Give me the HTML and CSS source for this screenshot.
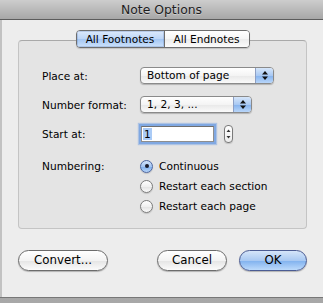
FILE: index.html
```html
<!DOCTYPE html>
<html>
<head>
<meta charset="utf-8">
<link rel="stylesheet" href="styles.css">
</head>
<body>
<div class="window">
  <div class="titlebar">Note Options</div>
  <div class="content">
    <div class="group">
      <div class="tabs">
        <div class="tab tab-sel">All Footnotes</div>
        <div class="tab tab-off">All Endnotes</div>
      </div>
      <div class="form">
        <div class="row r1">
          <div class="label">Place at:</div>
          <div class="popup popup-wide">
            <div class="val">Bottom of page</div>
            <div class="arr"><svg width="6" height="9" viewBox="0 0 6 9"><polygon points="0,3.5 3,0 6,3.5" fill="#111"/><polygon points="0,5.5 6,5.5 3,9" fill="#111"/></svg></div>
          </div>
        </div>
        <div class="row r2">
          <div class="label">Number format:</div>
          <div class="popup popup-narrow">
            <div class="val">1, 2, 3, ...</div>
            <div class="arr"><svg width="6" height="9" viewBox="0 0 6 9"><polygon points="0,3.5 3,0 6,3.5" fill="#111"/><polygon points="0,5.5 6,5.5 3,9" fill="#111"/></svg></div>
          </div>
        </div>
        <div class="row r3">
          <div class="label">Start at:</div>
          <div class="field"><span class="sel">1</span></div>
          <div class="stepper"><svg width="5" height="12" viewBox="0 0 5 12"><polygon points="0.5,4 2.5,1.5 4.5,4" fill="#333"/><polygon points="0.5,8 4.5,8 2.5,10.5" fill="#333"/></svg></div>
        </div>
        <div class="row r4">
          <div class="label lab-radio">Numbering:</div>
          <div class="opts">
            <div class="opt"><span class="radio radio-on"><span class="dot"></span></span>Continuous</div>
            <div class="opt"><span class="radio"></span>Restart each section</div>
            <div class="opt"><span class="radio"></span>Restart each page</div>
          </div>
        </div>
      </div>
    </div>
    <div class="buttons">
      <div class="btn btn-convert">Convert...</div>
      <div class="btn btn-cancel">Cancel</div>
      <div class="btn btn-ok">OK</div>
    </div>
  </div>
</div>
</body>
</html>
```
FILE: styles.css
```css
html, body {
  margin: 0;
  padding: 0;
}
body {
  width: 323px;
  height: 303px;
  overflow: hidden;
  background: linear-gradient(#8c8c8c, #a8a8a8);
  font-family: "DejaVu Sans", sans-serif;
  font-size: 10.6px;
  color: #000;
}
.window {
  height: 298px;
  background: #ededed;
  display: flex;
  flex-direction: column;
  box-sizing: border-box;
  border-bottom: 1px solid #777;
}
.titlebar {
  height: 19px;
  line-height: 19px;
  border-bottom: 1px solid #5c5c5c;
  background: linear-gradient(#cdcdcd, #a7a7a7);
  text-align: center;
  font-size: 12.4px;
  color: #1e1e1e;
  text-shadow: 0 1px 0 rgba(255, 255, 255, 0.35);
}
.content {
  flex: 1;
  border-left: 2px solid #c2c2c2;
  padding: 20px 16px 0 16px;
  display: flex;
  flex-direction: column;
}
.group {
  border: 1px solid #c4c4c4;
  border-top-color: #a9a9a9;
  border-radius: 4px;
  background: #e4e4e4;
  padding: 0 0 12px 0;
  display: flex;
  flex-direction: column;
}
.tabs {
  align-self: center;
  margin-top: -11px;
  display: flex;
  height: 18px;
  box-sizing: border-box;
  border: 1px solid #6d6d6d;
  border-radius: 4px;
  overflow: hidden;
  box-shadow: 0 1px 1px rgba(0, 0, 0, 0.15);
}
.tab {
  line-height: 16px;
  text-align: center;
  box-sizing: border-box;
}
.tab-sel {
  width: 87px;
  background: linear-gradient(#dce9fb 0%, #bcd5f7 50%, #a3c6f3 51%, #cde2fb 100%);
  box-shadow: inset 0 0 0 1px rgba(80, 110, 170, 0.25);
}
.tab-off {
  width: 85px;
  border-left: 1px solid #6d6d6d;
  background: linear-gradient(#ffffff 0%, #f5f5f5 50%, #ebebeb 51%, #fbfbfb 100%);
}
.form {
  padding-left: 23px;
  display: flex;
  flex-direction: column;
}
.row {
  display: flex;
  align-items: center;
}
.label {
  width: 98px;
  flex: none;
}
.r1 {
  margin-top: 19px;
  height: 17px;
}
.r2 {
  margin-top: 12px;
  height: 17px;
}
.r3 {
  margin-top: 10px;
  height: 22px;
}
.r4 {
  margin-top: 11px;
  align-items: flex-start;
}
.lab-radio {
  line-height: 20px;
}
.popup {
  display: flex;
  height: 17px;
  box-sizing: border-box;
  border: 1px solid #8a8a8a;
  border-radius: 4px;
  background: linear-gradient(#ffffff 0%, #f4f4f4 50%, #e8e8e8 51%, #fafafa 100%);
  box-shadow: 0 1px 1px rgba(0, 0, 0, 0.22);
  overflow: hidden;
}
.popup-wide {
  width: 134px;
}
.popup-narrow {
  width: 112px;
}
.val {
  flex: 1;
  padding-left: 6px;
  line-height: 15px;
  white-space: nowrap;
}
.arr {
  width: 17px;
  flex: none;
  border-left: 1px solid #8d9fc4;
  background: linear-gradient(#d6e6fa 0%, #a9c9f3 50%, #84b2ee 51%, #b9d6f9 100%);
  display: flex;
  align-items: center;
  justify-content: center;
}
.field {
  margin-left: 1px;
  width: 73px;
  height: 16px;
  box-sizing: border-box;
  border: 1px solid #8e8e8e;
  border-top-color: #6f6f6f;
  background: #fff;
  padding-left: 1px;
  line-height: 14px;
  box-shadow: 0 0 0 2px #80a8e2, 0 0 1px 3px rgba(128, 168, 226, 0.55);
}
.sel {
  background: #abcbf6;
  padding: 0 1px;
}
.stepper {
  margin-left: 10px;
  width: 9px;
  height: 18px;
  box-sizing: border-box;
  border: 1px solid #7a7a7a;
  border-radius: 4px;
  background: linear-gradient(#ffffff, #ececec);
  display: flex;
  align-items: center;
  justify-content: center;
  box-shadow: 0 1px 1px rgba(0, 0, 0, 0.15);
}
.opts {
  display: flex;
  flex-direction: column;
}
.opt {
  height: 20px;
  display: flex;
  align-items: center;
}
.radio {
  width: 13px;
  height: 13px;
  box-sizing: border-box;
  border-radius: 50%;
  border: 1px solid #7b7b7b;
  background: linear-gradient(#ffffff, #f0f0f0 50%, #e2e2e2 51%, #fafafa);
  box-shadow: 0 1px 1px rgba(0, 0, 0, 0.15);
  margin-right: 6px;
  display: flex;
  align-items: center;
  justify-content: center;
}
.radio-on {
  border-color: #4d66a0;
  background: linear-gradient(#d3e4fa, #a4c6f3 50%, #7eaeed 51%, #b6d4f8);
}
.dot {
  width: 4px;
  height: 4px;
  border-radius: 50%;
  background: #1a1a2a;
}
.buttons {
  display: flex;
  margin-top: 21px;
}
.btn {
  height: 21px;
  box-sizing: border-box;
  border: 1px solid #6c6c6c;
  border-radius: 11px;
  background: linear-gradient(#ffffff 0%, #f3f3f3 50%, #e4e4e4 51%, #fbfbfb 100%);
  box-shadow: 0 1px 1px rgba(0, 0, 0, 0.25);
  font-size: 11.8px;
  line-height: 19px;
  text-align: center;
}
.btn-convert {
  width: 90px;
}
.btn-cancel {
  width: 70px;
  margin-left: auto;
}
.btn-ok {
  width: 68px;
  margin-left: 12px;
  border-color: #4b5c93;
  background: linear-gradient(#d5e5f9 0%, #a9c9f2 50%, #80b1ee 51%, #bcdafb 100%);
}
```
